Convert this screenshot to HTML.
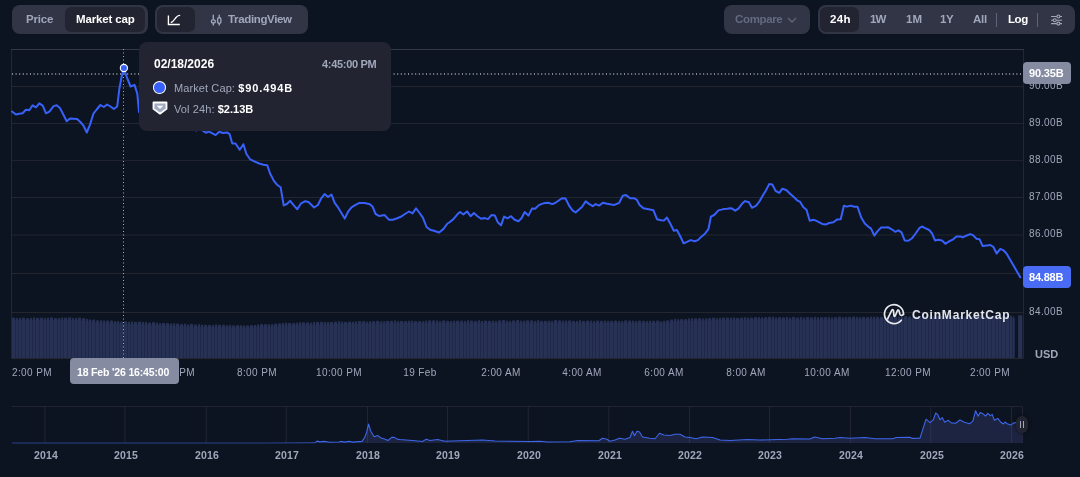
<!DOCTYPE html>
<html><head><meta charset="utf-8">
<style>
*{box-sizing:border-box;margin:0;padding:0}
html,body{width:1080px;height:477px;overflow:hidden;background:#0d1421;font-family:"Liberation Sans",sans-serif;}
.abs{position:absolute}
.pill{position:absolute;background:#323546;border-radius:8px;height:29px;top:5px}
.btn{position:absolute;background:#222531;border-radius:6px;top:2px;height:25px}
.t{position:absolute;font-size:12px;font-weight:700;white-space:nowrap;line-height:14px;will-change:transform}
.yl{position:absolute;left:1028.5px;font-size:10px;letter-spacing:0.4px;color:#a1a7bb;line-height:14px;white-space:nowrap;will-change:transform}
.xl{position:absolute;top:367px;width:80px;text-align:center;font-size:10px;letter-spacing:0.4px;color:#a1a7bb;line-height:12px;white-space:nowrap;will-change:transform}
.nl{position:absolute;top:448.5px;width:60px;text-align:center;font-size:10.5px;font-weight:700;letter-spacing:0.1px;color:#a1a7bb;line-height:12px;will-change:transform}
</style></head><body>
<svg width="1080" height="477" viewBox="0 0 1080 477" style="position:absolute;left:0;top:0">
<defs><clipPath id="vc"><rect x="12" y="300" width="1011" height="58"/></clipPath></defs>
<path d="M11.5 49 V358.5 H1023.5 V49" fill="none" stroke="#23272f" stroke-width="1"/>
<line x1="11" x2="1024" y1="49.5" y2="49.5" stroke="#343945" stroke-width="1"/>
<line x1="12" x2="1023" y1="86.5" y2="86.5" stroke="#23262f" stroke-width="1"/>
<line x1="12" x2="1023" y1="123.5" y2="123.5" stroke="#23262f" stroke-width="1"/>
<line x1="12" x2="1023" y1="160.4" y2="160.4" stroke="#23262f" stroke-width="1"/>
<line x1="12" x2="1023" y1="197.5" y2="197.5" stroke="#23262f" stroke-width="1"/>
<line x1="12" x2="1023" y1="235.0" y2="235.0" stroke="#23262f" stroke-width="1"/>
<line x1="12" x2="1023" y1="273.5" y2="273.5" stroke="#23262f" stroke-width="1"/>
<line x1="12" x2="1023" y1="312.5" y2="312.5" stroke="#23262f" stroke-width="1"/>
<polygon points="12,358 12,320.0 77,320.0 97,322.5 145,324.5 197,326.75 247,327.5 262,326.5 295,325.0 345,323.75 407,323.0 540,322.8 670,323.0 672,321.5 685,321.0 720,320.0 767,319.3 810,319.7 870,319.0 1000,318.0 1015,318.0 1015,358" fill="#1f2745"/>
<g clip-path="url(#vc)"><rect x="12" y="317.50" width="3.2" height="42.50" rx="1.3" fill="#273154"/><rect x="16" y="317.70" width="2.2" height="42.30" rx="1.3" fill="#273154"/><rect x="19" y="317.70" width="2.2" height="42.30" rx="1.3" fill="#273154"/><rect x="22" y="317.50" width="3.2" height="42.50" rx="1.3" fill="#273154"/><rect x="26" y="317.90" width="3.2" height="42.10" rx="1.3" fill="#273154"/><rect x="30" y="317.70" width="2.2" height="42.30" rx="1.3" fill="#273154"/><rect x="33" y="317.20" width="2.2" height="42.80" rx="1.3" fill="#273154"/><rect x="36" y="317.70" width="3.2" height="42.30" rx="1.3" fill="#273154"/><rect x="40" y="317.50" width="3.2" height="42.50" rx="1.3" fill="#273154"/><rect x="44" y="317.70" width="2.2" height="42.30" rx="1.3" fill="#273154"/><rect x="47" y="317.50" width="2.2" height="42.50" rx="1.3" fill="#273154"/><rect x="50" y="317.20" width="3.2" height="42.80" rx="1.3" fill="#273154"/><rect x="54" y="317.90" width="3.2" height="42.10" rx="1.3" fill="#273154"/><rect x="58" y="317.70" width="2.2" height="42.30" rx="1.3" fill="#273154"/><rect x="61" y="317.50" width="2.2" height="42.50" rx="1.3" fill="#273154"/><rect x="64" y="317.50" width="3.2" height="42.50" rx="1.3" fill="#273154"/><rect x="68" y="317.20" width="3.2" height="42.80" rx="1.3" fill="#273154"/><rect x="72" y="317.70" width="2.2" height="42.30" rx="1.3" fill="#273154"/><rect x="75" y="317.70" width="2.2" height="42.30" rx="1.3" fill="#273154"/><rect x="78" y="317.51" width="3.2" height="42.49" rx="1.3" fill="#273154"/><rect x="82" y="318.01" width="3.2" height="41.99" rx="1.3" fill="#273154"/><rect x="86" y="318.81" width="2.2" height="41.19" rx="1.3" fill="#273154"/><rect x="89" y="319.19" width="2.2" height="40.81" rx="1.3" fill="#273154"/><rect x="92" y="319.56" width="3.2" height="40.44" rx="1.3" fill="#273154"/><rect x="96" y="320.22" width="3.2" height="39.78" rx="1.3" fill="#273154"/><rect x="100" y="319.89" width="2.2" height="40.11" rx="1.3" fill="#273154"/><rect x="103" y="320.31" width="2.2" height="39.69" rx="1.3" fill="#273154"/><rect x="106" y="320.44" width="3.2" height="39.56" rx="1.3" fill="#273154"/><rect x="110" y="320.60" width="3.2" height="39.40" rx="1.3" fill="#273154"/><rect x="114" y="320.97" width="2.2" height="39.03" rx="1.3" fill="#273154"/><rect x="117" y="320.90" width="2.2" height="39.10" rx="1.3" fill="#273154"/><rect x="120" y="321.42" width="3.2" height="38.58" rx="1.3" fill="#273154"/><rect x="124" y="321.19" width="3.2" height="38.81" rx="1.3" fill="#273154"/><rect x="128" y="321.75" width="2.2" height="38.25" rx="1.3" fill="#273154"/><rect x="131" y="321.18" width="2.2" height="38.82" rx="1.3" fill="#273154"/><rect x="134" y="321.80" width="3.2" height="38.20" rx="1.3" fill="#273154"/><rect x="138" y="321.47" width="3.2" height="38.53" rx="1.3" fill="#273154"/><rect x="142" y="321.64" width="2.2" height="38.36" rx="1.3" fill="#273154"/><rect x="145" y="321.76" width="2.2" height="38.24" rx="1.3" fill="#273154"/><rect x="148" y="322.39" width="3.2" height="37.61" rx="1.3" fill="#273154"/><rect x="152" y="322.07" width="3.2" height="37.93" rx="1.3" fill="#273154"/><rect x="156" y="322.54" width="2.2" height="37.46" rx="1.3" fill="#273154"/><rect x="159" y="323.07" width="2.2" height="36.93" rx="1.3" fill="#273154"/><rect x="162" y="322.80" width="3.2" height="37.20" rx="1.3" fill="#273154"/><rect x="166" y="322.97" width="3.2" height="37.03" rx="1.3" fill="#273154"/><rect x="170" y="323.15" width="2.2" height="36.85" rx="1.3" fill="#273154"/><rect x="173" y="322.98" width="2.2" height="37.02" rx="1.3" fill="#273154"/><rect x="176" y="323.41" width="3.2" height="36.59" rx="1.3" fill="#273154"/><rect x="180" y="323.98" width="3.2" height="36.02" rx="1.3" fill="#273154"/><rect x="184" y="323.45" width="2.2" height="36.55" rx="1.3" fill="#273154"/><rect x="187" y="324.28" width="2.2" height="35.72" rx="1.3" fill="#273154"/><rect x="190" y="323.71" width="3.2" height="36.29" rx="1.3" fill="#273154"/><rect x="194" y="324.39" width="3.2" height="35.61" rx="1.3" fill="#273154"/><rect x="198" y="323.99" width="2.2" height="36.01" rx="1.3" fill="#273154"/><rect x="201" y="324.53" width="2.2" height="35.47" rx="1.3" fill="#273154"/><rect x="204" y="324.78" width="3.2" height="35.22" rx="1.3" fill="#273154"/><rect x="208" y="324.64" width="3.2" height="35.36" rx="1.3" fill="#273154"/><rect x="212" y="324.70" width="2.2" height="35.30" rx="1.3" fill="#273154"/><rect x="215" y="324.24" width="2.2" height="35.76" rx="1.3" fill="#273154"/><rect x="218" y="324.79" width="3.2" height="35.21" rx="1.3" fill="#273154"/><rect x="222" y="324.65" width="3.2" height="35.35" rx="1.3" fill="#273154"/><rect x="226" y="325.11" width="2.2" height="34.89" rx="1.3" fill="#273154"/><rect x="229" y="324.75" width="2.2" height="35.25" rx="1.3" fill="#273154"/><rect x="232" y="325.20" width="3.2" height="34.80" rx="1.3" fill="#273154"/><rect x="236" y="325.06" width="3.2" height="34.94" rx="1.3" fill="#273154"/><rect x="240" y="324.92" width="2.2" height="35.08" rx="1.3" fill="#273154"/><rect x="243" y="325.36" width="2.2" height="34.64" rx="1.3" fill="#273154"/><rect x="246" y="325.17" width="3.2" height="34.83" rx="1.3" fill="#273154"/><rect x="250" y="324.90" width="3.2" height="35.10" rx="1.3" fill="#273154"/><rect x="254" y="324.63" width="2.2" height="35.37" rx="1.3" fill="#273154"/><rect x="257" y="324.23" width="2.2" height="35.77" rx="1.3" fill="#273154"/><rect x="260" y="324.03" width="3.2" height="35.97" rx="1.3" fill="#273154"/><rect x="264" y="324.04" width="3.2" height="35.96" rx="1.3" fill="#273154"/><rect x="268" y="324.06" width="2.2" height="35.94" rx="1.3" fill="#273154"/><rect x="271" y="323.92" width="2.2" height="36.08" rx="1.3" fill="#273154"/><rect x="274" y="323.39" width="3.2" height="36.61" rx="1.3" fill="#273154"/><rect x="278" y="323.20" width="3.2" height="36.80" rx="1.3" fill="#273154"/><rect x="282" y="322.72" width="2.2" height="37.28" rx="1.3" fill="#273154"/><rect x="285" y="322.59" width="2.2" height="37.41" rx="1.3" fill="#273154"/><rect x="288" y="322.75" width="3.2" height="37.25" rx="1.3" fill="#273154"/><rect x="292" y="322.97" width="3.2" height="37.03" rx="1.3" fill="#273154"/><rect x="296" y="322.44" width="2.2" height="37.56" rx="1.3" fill="#273154"/><rect x="299" y="322.06" width="2.2" height="37.94" rx="1.3" fill="#273154"/><rect x="302" y="322.29" width="3.2" height="37.71" rx="1.3" fill="#273154"/><rect x="306" y="322.19" width="3.2" height="37.81" rx="1.3" fill="#273154"/><rect x="310" y="322.49" width="2.2" height="37.51" rx="1.3" fill="#273154"/><rect x="313" y="321.71" width="2.2" height="38.29" rx="1.3" fill="#273154"/><rect x="316" y="321.64" width="3.2" height="38.36" rx="1.3" fill="#273154"/><rect x="320" y="321.84" width="3.2" height="38.16" rx="1.3" fill="#273154"/><rect x="324" y="321.74" width="2.2" height="38.26" rx="1.3" fill="#273154"/><rect x="327" y="321.86" width="2.2" height="38.14" rx="1.3" fill="#273154"/><rect x="330" y="321.79" width="3.2" height="38.21" rx="1.3" fill="#273154"/><rect x="334" y="321.49" width="3.2" height="38.51" rx="1.3" fill="#273154"/><rect x="338" y="321.09" width="2.2" height="38.91" rx="1.3" fill="#273154"/><rect x="341" y="321.51" width="2.2" height="38.49" rx="1.3" fill="#273154"/><rect x="344" y="321.64" width="3.2" height="38.36" rx="1.3" fill="#273154"/><rect x="348" y="321.40" width="3.2" height="38.60" rx="1.3" fill="#273154"/><rect x="352" y="321.55" width="2.2" height="38.45" rx="1.3" fill="#273154"/><rect x="355" y="321.31" width="2.2" height="38.69" rx="1.3" fill="#273154"/><rect x="358" y="321.07" width="3.2" height="38.93" rx="1.3" fill="#273154"/><rect x="362" y="321.03" width="3.2" height="38.97" rx="1.3" fill="#273154"/><rect x="366" y="321.38" width="2.2" height="38.62" rx="1.3" fill="#273154"/><rect x="369" y="320.94" width="2.2" height="39.06" rx="1.3" fill="#273154"/><rect x="372" y="320.91" width="3.2" height="39.09" rx="1.3" fill="#273154"/><rect x="376" y="320.86" width="3.2" height="39.14" rx="1.3" fill="#273154"/><rect x="380" y="321.01" width="2.2" height="38.99" rx="1.3" fill="#273154"/><rect x="383" y="320.97" width="2.2" height="39.03" rx="1.3" fill="#273154"/><rect x="386" y="320.74" width="3.2" height="39.26" rx="1.3" fill="#273154"/><rect x="390" y="320.69" width="3.2" height="39.31" rx="1.3" fill="#273154"/><rect x="394" y="320.34" width="2.2" height="39.66" rx="1.3" fill="#273154"/><rect x="397" y="321.00" width="2.2" height="39.00" rx="1.3" fill="#273154"/><rect x="400" y="320.77" width="3.2" height="39.23" rx="1.3" fill="#273154"/><rect x="404" y="320.92" width="3.2" height="39.08" rx="1.3" fill="#273154"/><rect x="408" y="320.50" width="2.2" height="39.50" rx="1.3" fill="#273154"/><rect x="411" y="320.49" width="2.2" height="39.51" rx="1.3" fill="#273154"/><rect x="414" y="320.89" width="3.2" height="39.11" rx="1.3" fill="#273154"/><rect x="418" y="320.88" width="3.2" height="39.12" rx="1.3" fill="#273154"/><rect x="422" y="320.88" width="2.2" height="39.12" rx="1.3" fill="#273154"/><rect x="425" y="320.47" width="2.2" height="39.53" rx="1.3" fill="#273154"/><rect x="428" y="320.17" width="3.2" height="39.83" rx="1.3" fill="#273154"/><rect x="432" y="320.16" width="3.2" height="39.84" rx="1.3" fill="#273154"/><rect x="436" y="320.15" width="2.2" height="39.85" rx="1.3" fill="#273154"/><rect x="439" y="320.65" width="2.2" height="39.35" rx="1.3" fill="#273154"/><rect x="442" y="320.15" width="3.2" height="39.85" rx="1.3" fill="#273154"/><rect x="446" y="320.64" width="3.2" height="39.36" rx="1.3" fill="#273154"/><rect x="450" y="320.63" width="2.2" height="39.37" rx="1.3" fill="#273154"/><rect x="453" y="320.43" width="2.2" height="39.57" rx="1.3" fill="#273154"/><rect x="456" y="320.62" width="3.2" height="39.38" rx="1.3" fill="#273154"/><rect x="460" y="320.62" width="3.2" height="39.38" rx="1.3" fill="#273154"/><rect x="464" y="320.81" width="2.2" height="39.19" rx="1.3" fill="#273154"/><rect x="467" y="320.11" width="2.2" height="39.89" rx="1.3" fill="#273154"/><rect x="470" y="320.40" width="3.2" height="39.60" rx="1.3" fill="#273154"/><rect x="474" y="320.80" width="3.2" height="39.20" rx="1.3" fill="#273154"/><rect x="478" y="320.09" width="2.2" height="39.91" rx="1.3" fill="#273154"/><rect x="481" y="320.79" width="2.2" height="39.21" rx="1.3" fill="#273154"/><rect x="484" y="320.58" width="3.2" height="39.42" rx="1.3" fill="#273154"/><rect x="488" y="320.78" width="3.2" height="39.22" rx="1.3" fill="#273154"/><rect x="492" y="320.57" width="2.2" height="39.43" rx="1.3" fill="#273154"/><rect x="495" y="320.77" width="2.2" height="39.23" rx="1.3" fill="#273154"/><rect x="498" y="320.36" width="3.2" height="39.64" rx="1.3" fill="#273154"/><rect x="502" y="320.05" width="3.2" height="39.95" rx="1.3" fill="#273154"/><rect x="506" y="320.55" width="2.2" height="39.45" rx="1.3" fill="#273154"/><rect x="509" y="320.74" width="2.2" height="39.26" rx="1.3" fill="#273154"/><rect x="512" y="320.34" width="3.2" height="39.66" rx="1.3" fill="#273154"/><rect x="516" y="320.03" width="3.2" height="39.97" rx="1.3" fill="#273154"/><rect x="520" y="320.53" width="2.2" height="39.47" rx="1.3" fill="#273154"/><rect x="523" y="320.52" width="2.2" height="39.48" rx="1.3" fill="#273154"/><rect x="526" y="320.32" width="3.2" height="39.68" rx="1.3" fill="#273154"/><rect x="530" y="320.31" width="3.2" height="39.69" rx="1.3" fill="#273154"/><rect x="534" y="320.71" width="2.2" height="39.29" rx="1.3" fill="#273154"/><rect x="537" y="320.00" width="2.2" height="40.00" rx="1.3" fill="#273154"/><rect x="540" y="320.70" width="3.2" height="39.30" rx="1.3" fill="#273154"/><rect x="544" y="320.71" width="3.2" height="39.29" rx="1.3" fill="#273154"/><rect x="548" y="320.51" width="2.2" height="39.49" rx="1.3" fill="#273154"/><rect x="551" y="320.72" width="2.2" height="39.28" rx="1.3" fill="#273154"/><rect x="554" y="320.02" width="3.2" height="39.98" rx="1.3" fill="#273154"/><rect x="558" y="320.33" width="3.2" height="39.67" rx="1.3" fill="#273154"/><rect x="562" y="320.54" width="2.2" height="39.46" rx="1.3" fill="#273154"/><rect x="565" y="320.34" width="2.2" height="39.66" rx="1.3" fill="#273154"/><rect x="568" y="320.35" width="3.2" height="39.65" rx="1.3" fill="#273154"/><rect x="572" y="320.75" width="3.2" height="39.25" rx="1.3" fill="#273154"/><rect x="576" y="320.76" width="2.2" height="39.24" rx="1.3" fill="#273154"/><rect x="579" y="320.06" width="2.2" height="39.94" rx="1.3" fill="#273154"/><rect x="582" y="320.77" width="3.2" height="39.23" rx="1.3" fill="#273154"/><rect x="586" y="320.57" width="3.2" height="39.43" rx="1.3" fill="#273154"/><rect x="590" y="320.58" width="2.2" height="39.42" rx="1.3" fill="#273154"/><rect x="593" y="320.78" width="2.2" height="39.22" rx="1.3" fill="#273154"/><rect x="596" y="320.39" width="3.2" height="39.61" rx="1.3" fill="#273154"/><rect x="600" y="320.79" width="3.2" height="39.21" rx="1.3" fill="#273154"/><rect x="604" y="320.40" width="2.2" height="39.60" rx="1.3" fill="#273154"/><rect x="607" y="320.81" width="2.2" height="39.19" rx="1.3" fill="#273154"/><rect x="610" y="320.81" width="3.2" height="39.19" rx="1.3" fill="#273154"/><rect x="614" y="320.62" width="3.2" height="39.38" rx="1.3" fill="#273154"/><rect x="618" y="320.82" width="2.2" height="39.18" rx="1.3" fill="#273154"/><rect x="621" y="320.83" width="2.2" height="39.17" rx="1.3" fill="#273154"/><rect x="624" y="320.13" width="3.2" height="39.87" rx="1.3" fill="#273154"/><rect x="628" y="320.44" width="3.2" height="39.56" rx="1.3" fill="#273154"/><rect x="632" y="320.44" width="2.2" height="39.56" rx="1.3" fill="#273154"/><rect x="635" y="320.65" width="2.2" height="39.35" rx="1.3" fill="#273154"/><rect x="638" y="320.45" width="3.2" height="39.55" rx="1.3" fill="#273154"/><rect x="642" y="320.86" width="3.2" height="39.14" rx="1.3" fill="#273154"/><rect x="646" y="320.67" width="2.2" height="39.33" rx="1.3" fill="#273154"/><rect x="649" y="320.47" width="2.2" height="39.53" rx="1.3" fill="#273154"/><rect x="652" y="320.87" width="3.2" height="39.13" rx="1.3" fill="#273154"/><rect x="656" y="320.48" width="3.2" height="39.52" rx="1.3" fill="#273154"/><rect x="660" y="320.89" width="2.2" height="39.11" rx="1.3" fill="#273154"/><rect x="663" y="320.49" width="2.2" height="39.51" rx="1.3" fill="#273154"/><rect x="666" y="320.20" width="3.2" height="39.80" rx="1.3" fill="#273154"/><rect x="670" y="319.38" width="3.2" height="40.62" rx="1.3" fill="#273154"/><rect x="674" y="318.87" width="2.2" height="41.13" rx="1.3" fill="#273154"/><rect x="677" y="318.95" width="2.2" height="41.05" rx="1.3" fill="#273154"/><rect x="680" y="319.03" width="3.2" height="40.97" rx="1.3" fill="#273154"/><rect x="684" y="318.89" width="3.2" height="41.11" rx="1.3" fill="#273154"/><rect x="688" y="318.37" width="2.2" height="41.63" rx="1.3" fill="#273154"/><rect x="691" y="317.99" width="2.2" height="42.01" rx="1.3" fill="#273154"/><rect x="694" y="318.20" width="3.2" height="41.80" rx="1.3" fill="#273154"/><rect x="698" y="318.09" width="3.2" height="41.91" rx="1.3" fill="#273154"/><rect x="702" y="318.37" width="2.2" height="41.63" rx="1.3" fill="#273154"/><rect x="705" y="317.89" width="2.2" height="42.11" rx="1.3" fill="#273154"/><rect x="708" y="318.00" width="3.2" height="42.00" rx="1.3" fill="#273154"/><rect x="712" y="317.39" width="3.2" height="42.61" rx="1.3" fill="#273154"/><rect x="716" y="317.97" width="2.2" height="42.03" rx="1.3" fill="#273154"/><rect x="719" y="317.49" width="2.2" height="42.51" rx="1.3" fill="#273154"/><rect x="722" y="317.45" width="3.2" height="42.55" rx="1.3" fill="#273154"/><rect x="726" y="317.39" width="3.2" height="42.61" rx="1.3" fill="#273154"/><rect x="730" y="317.53" width="2.2" height="42.47" rx="1.3" fill="#273154"/><rect x="733" y="317.28" width="2.2" height="42.72" rx="1.3" fill="#273154"/><rect x="736" y="317.64" width="3.2" height="42.36" rx="1.3" fill="#273154"/><rect x="740" y="317.38" width="3.2" height="42.62" rx="1.3" fill="#273154"/><rect x="744" y="317.12" width="2.2" height="42.88" rx="1.3" fill="#273154"/><rect x="747" y="317.48" width="2.2" height="42.52" rx="1.3" fill="#273154"/><rect x="750" y="317.43" width="3.2" height="42.57" rx="1.3" fill="#273154"/><rect x="754" y="316.97" width="3.2" height="43.03" rx="1.3" fill="#273154"/><rect x="758" y="317.11" width="2.2" height="42.89" rx="1.3" fill="#273154"/><rect x="761" y="317.27" width="2.2" height="42.73" rx="1.3" fill="#273154"/><rect x="764" y="317.02" width="3.2" height="42.98" rx="1.3" fill="#273154"/><rect x="768" y="316.82" width="3.2" height="43.18" rx="1.3" fill="#273154"/><rect x="772" y="316.56" width="2.2" height="43.44" rx="1.3" fill="#273154"/><rect x="775" y="317.29" width="2.2" height="42.71" rx="1.3" fill="#273154"/><rect x="778" y="317.12" width="3.2" height="42.88" rx="1.3" fill="#273154"/><rect x="782" y="317.35" width="3.2" height="42.65" rx="1.3" fill="#273154"/><rect x="786" y="316.69" width="2.2" height="43.31" rx="1.3" fill="#273154"/><rect x="789" y="317.42" width="2.2" height="42.58" rx="1.3" fill="#273154"/><rect x="792" y="316.75" width="3.2" height="43.25" rx="1.3" fill="#273154"/><rect x="796" y="317.48" width="3.2" height="42.52" rx="1.3" fill="#273154"/><rect x="800" y="316.82" width="2.2" height="43.18" rx="1.3" fill="#273154"/><rect x="803" y="317.35" width="2.2" height="42.65" rx="1.3" fill="#273154"/><rect x="806" y="316.88" width="3.2" height="43.12" rx="1.3" fill="#273154"/><rect x="810" y="317.18" width="3.2" height="42.82" rx="1.3" fill="#273154"/><rect x="814" y="316.84" width="2.2" height="43.16" rx="1.3" fill="#273154"/><rect x="817" y="317.10" width="2.2" height="42.90" rx="1.3" fill="#273154"/><rect x="820" y="317.07" width="3.2" height="42.93" rx="1.3" fill="#273154"/><rect x="824" y="317.02" width="3.2" height="42.98" rx="1.3" fill="#273154"/><rect x="828" y="316.67" width="2.2" height="43.33" rx="1.3" fill="#273154"/><rect x="831" y="317.14" width="2.2" height="42.86" rx="1.3" fill="#273154"/><rect x="834" y="317.10" width="3.2" height="42.90" rx="1.3" fill="#273154"/><rect x="838" y="316.56" width="3.2" height="43.44" rx="1.3" fill="#273154"/><rect x="842" y="317.01" width="2.2" height="42.99" rx="1.3" fill="#273154"/><rect x="845" y="316.77" width="2.2" height="43.23" rx="1.3" fill="#273154"/><rect x="848" y="316.74" width="3.2" height="43.26" rx="1.3" fill="#273154"/><rect x="852" y="316.39" width="3.2" height="43.61" rx="1.3" fill="#273154"/><rect x="856" y="316.85" width="2.2" height="43.15" rx="1.3" fill="#273154"/><rect x="859" y="317.01" width="2.2" height="42.99" rx="1.3" fill="#273154"/><rect x="862" y="316.78" width="3.2" height="43.22" rx="1.3" fill="#273154"/><rect x="866" y="316.93" width="3.2" height="43.07" rx="1.3" fill="#273154"/><rect x="870" y="316.49" width="2.2" height="43.51" rx="1.3" fill="#273154"/><rect x="873" y="316.47" width="2.2" height="43.53" rx="1.3" fill="#273154"/><rect x="876" y="316.64" width="3.2" height="43.36" rx="1.3" fill="#273154"/><rect x="880" y="316.81" width="3.2" height="43.19" rx="1.3" fill="#273154"/><rect x="884" y="316.38" width="2.2" height="43.62" rx="1.3" fill="#273154"/><rect x="887" y="316.36" width="2.2" height="43.64" rx="1.3" fill="#273154"/><rect x="890" y="316.33" width="3.2" height="43.67" rx="1.3" fill="#273154"/><rect x="894" y="316.30" width="3.2" height="43.70" rx="1.3" fill="#273154"/><rect x="898" y="316.47" width="2.2" height="43.53" rx="1.3" fill="#273154"/><rect x="901" y="316.25" width="2.2" height="43.75" rx="1.3" fill="#273154"/><rect x="904" y="315.93" width="3.2" height="44.07" rx="1.3" fill="#273154"/><rect x="908" y="316.40" width="3.2" height="43.60" rx="1.3" fill="#273154"/><rect x="912" y="316.17" width="2.2" height="43.83" rx="1.3" fill="#273154"/><rect x="915" y="316.14" width="2.2" height="43.86" rx="1.3" fill="#273154"/><rect x="918" y="315.82" width="3.2" height="44.18" rx="1.3" fill="#273154"/><rect x="922" y="316.09" width="3.2" height="43.91" rx="1.3" fill="#273154"/><rect x="926" y="316.06" width="2.2" height="43.94" rx="1.3" fill="#273154"/><rect x="929" y="316.23" width="2.2" height="43.77" rx="1.3" fill="#273154"/><rect x="932" y="316.41" width="3.2" height="43.59" rx="1.3" fill="#273154"/><rect x="936" y="315.98" width="3.2" height="44.02" rx="1.3" fill="#273154"/><rect x="940" y="315.95" width="2.2" height="44.05" rx="1.3" fill="#273154"/><rect x="943" y="316.13" width="2.2" height="43.87" rx="1.3" fill="#273154"/><rect x="946" y="316.10" width="3.2" height="43.90" rx="1.3" fill="#273154"/><rect x="950" y="315.57" width="3.2" height="44.43" rx="1.3" fill="#273154"/><rect x="954" y="315.84" width="2.2" height="44.16" rx="1.3" fill="#273154"/><rect x="957" y="316.02" width="2.2" height="43.98" rx="1.3" fill="#273154"/><rect x="960" y="315.80" width="3.2" height="44.20" rx="1.3" fill="#273154"/><rect x="964" y="316.17" width="3.2" height="43.83" rx="1.3" fill="#273154"/><rect x="968" y="315.73" width="2.2" height="44.27" rx="1.3" fill="#273154"/><rect x="971" y="316.11" width="2.2" height="43.89" rx="1.3" fill="#273154"/><rect x="974" y="315.89" width="3.2" height="44.11" rx="1.3" fill="#273154"/><rect x="978" y="315.36" width="3.2" height="44.64" rx="1.3" fill="#273154"/><rect x="982" y="315.63" width="2.2" height="44.37" rx="1.3" fill="#273154"/><rect x="985" y="316.00" width="2.2" height="44.00" rx="1.3" fill="#273154"/><rect x="988" y="315.58" width="3.2" height="44.42" rx="1.3" fill="#273154"/><rect x="992" y="315.55" width="3.2" height="44.45" rx="1.3" fill="#273154"/><rect x="996" y="315.52" width="2.2" height="44.48" rx="1.3" fill="#273154"/><rect x="999" y="315.70" width="2.2" height="44.30" rx="1.3" fill="#273154"/><rect x="1002" y="315.50" width="3.2" height="44.50" rx="1.3" fill="#273154"/><rect x="1006" y="315.50" width="3.2" height="44.50" rx="1.3" fill="#273154"/><rect x="1010" y="315.50" width="2.2" height="44.50" rx="1.3" fill="#273154"/><rect x="1013" y="315.90" width="1.2" height="44.10" rx="1.3" fill="#273154"/><rect x="1018.1" y="315.3" width="4.2" height="45" rx="1.1" fill="#283153"/></g>
<line x1="12" x2="1023" y1="74" y2="74" stroke="#a9adb9" stroke-width="1.5" stroke-dasharray="1 2.6"/>
<line x1="123.5" x2="123.5" y1="49" y2="358" stroke="#a9adb9" stroke-width="1" stroke-dasharray="1 2.5"/>
<polyline points="12,111.5 15.9,114.5 19.2,113.7 22.6,113.3 25.9,109.8 29.3,110.3 32.6,105.3 36,107.3 39.3,103.3 42.7,105.6 46,113.3 49.4,111.7 53.6,106.1 56.6,105.3 60,108.1 63.3,114.5 66.7,121.2 70,118.4 73.4,118.7 77.1,119 80.4,122 83.8,126.2 86.8,132.5 90,124.6 93.4,113.7 96.7,109.5 100.4,105 103.8,107 107.1,104.5 110.5,106.5 113.8,109 117.2,106.5 119.4,88.5 121.6,76.8 123.7,68.2 127.3,78.5 130.6,86.5 134.5,84.9 137.3,93.6 139,112 150,118 170,122 190,126 196.3,130.4 200,127.5 203.3,131.2 205.9,132.7 208.9,131.6 211.5,132.9 215.6,135.1 219.3,131.8 222.9,133 227,132.4 229.6,134.1 232.3,143.5 235.5,143.5 239.7,149.8 243.4,144.2 246.4,154 250.1,159.3 255.4,161.8 259.2,163.5 263.4,164.7 267.2,165.2 270.1,173.5 273.9,180.9 277,184.7 280.6,187.2 283.7,205.4 286.9,204 290.2,200.8 293.8,205.4 297.3,209.2 301.1,203.3 305.3,201.2 308.5,202 314.1,207.5 317.9,205 321,198.7 324.6,194.1 328,197 331.5,194.5 334.7,202.9 337.8,207.1 344.7,218.6 348.3,211.3 351.4,207.5 354.2,205.6 359.4,202.9 364.7,203.1 369.9,204.2 372.6,206.7 375.6,214 379.4,216.1 384.6,215.1 388.8,219.7 393,219.7 397.2,218.2 401.4,216.5 404.9,214 409.1,211.5 412.5,213.4 416,208.4 419.6,213 423,217.8 426.5,227 430.1,229.7 433.9,230.8 439.1,232.5 443.3,229.1 447.5,223.5 449.2,222.5 453.4,219.1 457.6,214.1 460.1,212 463.4,214.5 467,211.4 470.6,216.2 473.9,213 477.5,216.2 481.1,218.7 484.8,218.1 488,219.1 491.5,215.1 494.9,215.6 497.8,222.3 501,225.4 504.1,216.6 507.5,218.3 511,216.2 514.6,219.7 518.4,221.2 521.5,218.3 524.7,212 528.4,215.6 532,208.6 535.1,208.8 538.9,205.1 542.5,203.6 545,203 548.4,202.8 552.2,204.1 555.1,203 558.4,200.7 562,198.2 565.6,198.6 569.4,206.2 572.5,210.4 575.6,212.5 578.8,209.7 581.9,207 585.7,201.4 589.3,204.1 592.8,206.2 595.6,204.1 599.1,205.6 602.9,202.8 607.1,203.7 611.3,204.5 614.4,204.9 619.2,202.8 622.8,195.7 626,195.1 630.1,198.2 633.9,198.2 636.9,199.9 639.6,204.9 643.4,208.3 648.6,209.3 653.4,210.2 657,219.2 661.2,220.2 663.9,220.6 666.9,217.5 670.2,223.4 673.8,230.7 676.9,230.1 680.1,236 683.6,243.3 687,241.8 690.6,240.1 694.7,241.2 697.9,240.1 701.7,236.4 705.2,233.4 708.4,229.2 710.9,216.7 714.2,215 718.4,210.4 723.5,209.1 727.2,208.7 730,208.2 732.1,208.6 735.2,210.7 738.4,208.6 742.2,203.6 745.1,201.1 748.9,202.3 752,207.8 756.2,205.7 759.4,201.5 762.5,196.1 765.6,191 769.2,184.1 772.3,184.5 775.7,191 779.3,192.9 782.4,188.7 786.2,190 790.4,194 794.6,197.7 797.1,200.3 800.2,201.9 803.4,207.2 806.5,209.7 809.7,220.8 813.4,219.7 817,221.2 822.2,223.9 826,224.4 829.2,223 833.4,222.3 837.2,219.4 840.7,219.2 843.9,205.8 847,206.6 850.6,205.6 854.4,206.8 857.5,206.8 861.1,217.3 864.8,223.6 869,227.2 871.1,228.6 874.3,235.6 877.4,231.4 881.2,227.4 885.8,227.6 887.9,227.2 891.7,229.3 895.2,231.8 898.4,230.3 901.5,232.4 904.7,240.4 908.4,240.8 912,238.3 915.6,233.5 919.3,228.2 921.9,226.5 925.1,228.1 929.2,230 932,233.4 935,240.4 938.5,239.7 941.9,240.4 945.4,243.8 948.8,241.5 952.7,239.7 956.4,236.4 960.4,236.4 962.7,237.4 966.1,235.7 970.3,234.1 973,235.1 976.5,238.7 979.5,239.2 982.7,246.1 986.9,245.4 990.3,245 993.3,246.8 996.6,253.5 1000.3,248.9 1003.5,250.3 1006.5,253.5 1020.3,277.3" fill="none" stroke="#3861fb" stroke-width="2" stroke-linejoin="round" stroke-linecap="round"/>
<circle cx="123.9" cy="68" r="3.6" fill="#3861fb" stroke="#ffffff" stroke-width="1.1"/>
<path d="M12 406.5 H1022.5 V443" fill="none" stroke="#222531" stroke-width="1"/>
<line x1="45" x2="45" y1="406" y2="443" stroke="#222531" stroke-width="1"/>
<line x1="125" x2="125" y1="406" y2="443" stroke="#222531" stroke-width="1"/>
<line x1="206.25" x2="206.25" y1="406" y2="443" stroke="#222531" stroke-width="1"/>
<line x1="286.25" x2="286.25" y1="406" y2="443" stroke="#222531" stroke-width="1"/>
<line x1="367.5" x2="367.5" y1="406" y2="443" stroke="#222531" stroke-width="1"/>
<line x1="447.5" x2="447.5" y1="406" y2="443" stroke="#222531" stroke-width="1"/>
<line x1="528.25" x2="528.25" y1="406" y2="443" stroke="#222531" stroke-width="1"/>
<line x1="608.75" x2="608.75" y1="406" y2="443" stroke="#222531" stroke-width="1"/>
<line x1="689.5" x2="689.5" y1="406" y2="443" stroke="#222531" stroke-width="1"/>
<line x1="769.5" x2="769.5" y1="406" y2="443" stroke="#222531" stroke-width="1"/>
<line x1="850.5" x2="850.5" y1="406" y2="443" stroke="#222531" stroke-width="1"/>
<line x1="930.75" x2="930.75" y1="406" y2="443" stroke="#222531" stroke-width="1"/>
<line x1="1011.5" x2="1011.5" y1="406" y2="443" stroke="#222531" stroke-width="1"/>
<polygon points="12,443 12,443 270,443 315,442.6 317.1,441.1 319.9,441.9 324.1,441.4 329.6,442.3 338.9,442 340.7,441.4 344.4,442.1 349.1,441.4 352.8,442.1 362,441.4 364.8,437.2 366.7,432.1 368.5,424 370.8,431.2 374.1,436.8 377.8,435.6 380.6,437.7 385.2,439.3 388,440.5 391.7,437.4 394.4,437.4 397.2,439.1 400,439.5 415,440.75 422.5,441.5 426.25,439.25 430,440.5 437.5,439.5 445,441.25 482.5,440 495,441 530,441.5 540,441.25 547.5,442 570,441.75 577.5,440.5 598.75,440.75 602.5,438.25 607,439.25 610,441.25 615,440 619.5,438.25 625,439.25 630,437.5 632.5,431.25 634.5,435.75 637,431.25 639.5,432 642.5,437 650,438.25 655,438.75 659.5,433.25 663.75,435 670,435.5 675,434.25 680,434.25 685,437 690,437.5 696.25,438.75 702.5,437 712.5,437.5 720,440 730,440.5 747.5,439.5 760,440 787.5,439.25 792.5,438.75 810,439 814.5,437 822.5,438.75 835,438.25 840,437.5 850,438.25 865,437.5 875,438.75 892.5,438.75 896.25,437.5 910,437.3 912.2,438.4 920,438.1 926.1,419.2 930,422.6 933.3,419.8 935.8,412.9 937.8,414.8 940,419.8 942.2,417.6 944.7,422.2 948.3,420.3 951.3,422.9 955.6,423.3 960,420 964.4,422.2 969.4,423.7 972.8,421.4 975.6,410.7 978,416.2 980.2,412.6 982.8,413.7 985.6,416.2 987.8,413.3 990.2,415.6 992.2,414.4 994.4,420.3 997.8,418.4 1000.6,422 1003.3,424 1005,422 1007.2,423.7 1010.6,425.1 1013.3,423.1 1015.6,422.6 1022,422.6 1022.5,443" fill="rgba(88,100,198,0.2)"/>
<polyline points="315,442.6 317.1,441.1 319.9,441.9 324.1,441.4 329.6,442.3 338.9,442 340.7,441.4 344.4,442.1 349.1,441.4 352.8,442.1 362,441.4 364.8,437.2 366.7,432.1 368.5,424 370.8,431.2 374.1,436.8 377.8,435.6 380.6,437.7 385.2,439.3 388,440.5 391.7,437.4 394.4,437.4 397.2,439.1 400,439.5 415,440.75 422.5,441.5 426.25,439.25 430,440.5 437.5,439.5 445,441.25 482.5,440 495,441 530,441.5 540,441.25 547.5,442 570,441.75 577.5,440.5 598.75,440.75 602.5,438.25 607,439.25 610,441.25 615,440 619.5,438.25 625,439.25 630,437.5 632.5,431.25 634.5,435.75 637,431.25 639.5,432 642.5,437 650,438.25 655,438.75 659.5,433.25 663.75,435 670,435.5 675,434.25 680,434.25 685,437 690,437.5 696.25,438.75 702.5,437 712.5,437.5 720,440 730,440.5 747.5,439.5 760,440 787.5,439.25 792.5,438.75 810,439 814.5,437 822.5,438.75 835,438.25 840,437.5 850,438.25 865,437.5 875,438.75 892.5,438.75 896.25,437.5 910,437.3 912.2,438.4 920,438.1 926.1,419.2 930,422.6 933.3,419.8 935.8,412.9 937.8,414.8 940,419.8 942.2,417.6 944.7,422.2 948.3,420.3 951.3,422.9 955.6,423.3 960,420 964.4,422.2 969.4,423.7 972.8,421.4 975.6,410.7 978,416.2 980.2,412.6 982.8,413.7 985.6,416.2 987.8,413.3 990.2,415.6 992.2,414.4 994.4,420.3 997.8,418.4 1000.6,422 1003.3,424 1005,422 1007.2,423.7 1010.6,425.1 1013.3,423.1 1015.6,422.6 1022,422.6" fill="none" stroke="#3d66ea" stroke-width="1.1" stroke-linejoin="round"/>
<polyline points="12,443 270,443 315,442.6" fill="none" stroke="#3d66ea" stroke-opacity="0.55" stroke-width="1.1"/>
</svg>
<div class="yl" style="top:78.7px">90.00B</div>
<div class="yl" style="top:115.7px">89.00B</div>
<div class="yl" style="top:152.6px">88.00B</div>
<div class="yl" style="top:189.7px">87.00B</div>
<div class="yl" style="top:227.2px">86.00B</div>
<div class="yl" style="top:304.7px">84.00B</div>
<div class="xl" style="left:-7.6px">2:00 PM</div>
<div class="xl" style="left:135.2px">6:00 PM</div>
<div class="xl" style="left:216.8px">8:00 PM</div>
<div class="xl" style="left:298.5px">10:00 PM</div>
<div class="xl" style="left:379.7px">19 Feb</div>
<div class="xl" style="left:461.3px">2:00 AM</div>
<div class="xl" style="left:542.3px">4:00 AM</div>
<div class="xl" style="left:624.1px">6:00 AM</div>
<div class="xl" style="left:705.7px">8:00 AM</div>
<div class="xl" style="left:786.8px">10:00 AM</div>
<div class="xl" style="left:868.1px">12:00 PM</div>
<div class="xl" style="left:949.9px">2:00 PM</div>
<div class="nl" style="left:15.8px">2014</div>
<div class="nl" style="left:95.8px">2015</div>
<div class="nl" style="left:177.1px">2016</div>
<div class="nl" style="left:257.1px">2017</div>
<div class="nl" style="left:338.3px">2018</div>
<div class="nl" style="left:418.3px">2019</div>
<div class="nl" style="left:499.1px">2020</div>
<div class="nl" style="left:579.5px">2021</div>
<div class="nl" style="left:660.3px">2022</div>
<div class="nl" style="left:740.3px">2023</div>
<div class="nl" style="left:821.3px">2024</div>
<div class="nl" style="left:901.5px">2025</div>
<div class="nl" style="left:982.3px">2026</div>
<!-- top-left pills -->
<div class="pill" style="left:12px;width:136px">
  <div class="btn" style="left:53px;width:80px"></div>
</div>
<div class="t" id="tPrice" style="left:26px;top:12px;color:#a1a7bb;letter-spacing:-0.2px;font-size:11.5px;">Price</div>
<div class="t" id="tMcap" style="left:76px;top:12px;color:#ffffff;letter-spacing:-0.15px;font-size:11.5px;">Market cap</div>
<div class="pill" style="left:155px;width:153px">
  <div class="btn" style="left:2px;width:38px"></div>
</div>
<svg class="abs" style="left:160px;top:8px" width="30" height="24" viewBox="0 0 30 24"><path d="M8.4 7.4 V16.5 H19.8" fill="none" stroke="#fff" stroke-width="1.35"/><path d="M11.3 14.4 C13 13.6 14 12 15.6 10 C17 8.2 18 7.4 19.6 7.4" fill="none" stroke="#fff" stroke-width="1.3" stroke-linecap="round"/></svg>
<svg class="abs" style="left:206px;top:11px" width="20" height="18" viewBox="0 0 20 18"><g fill="none" stroke="#a1a7bb" stroke-width="1.35"><rect x="5.4" y="8.8" width="3.9" height="3.1" rx="1.5"/><rect x="11.6" y="6.7" width="3.3" height="5.6" rx="1.5"/><path d="M7.3 3.8V8.8M7.3 11.9V14.5M13.25 3.8V6.7M13.25 12.3V14.5"/></g></svg>
<div class="t" id="tTV" style="left:227.5px;top:12px;color:#a1a7bb;letter-spacing:-0.35px;font-size:11.5px;">TradingView</div>

<div class="pill" style="left:724px;width:86px"></div>
<div class="t" id="tCmp" style="left:734.7px;top:12px;color:#646a80;font-size:11.5px;letter-spacing:-0.35px">Compare</div>
<svg class="abs" style="left:787px;top:16px" width="10" height="8" viewBox="0 0 10 8"><path d="M1 2 L5 6 L9 2" fill="none" stroke="#5e6479" stroke-width="1.4"/></svg>

<div class="pill" style="left:818px;width:257px">
  <div class="btn" style="left:2px;width:39px"></div>
</div>
<div class="t" id="t24" style="left:829.5px;top:12px;color:#fff;letter-spacing:0.3px;font-size:11.5px;">24h</div>
<div class="t" id="t1W" style="left:869.5px;top:12px;color:#a1a7bb;letter-spacing:-0.8px;font-size:11.5px;">1W</div>
<div class="t" id="t1M" style="left:906px;top:12px;color:#a1a7bb;font-size:11.5px;">1M</div>
<div class="t" id="t1Y" style="left:940px;top:12px;color:#a1a7bb;letter-spacing:-0.4px;font-size:11.5px;">1Y</div>
<div class="t" id="tAll" style="left:973px;top:12px;color:#a1a7bb;letter-spacing:-0.3px;font-size:11.5px;">All</div>
<div class="abs" style="left:996.2px;top:13px;width:1.1px;height:14px;background:#5e6479"></div>
<div class="t" id="tLog" style="left:1007.5px;top:12px;color:#fff;letter-spacing:-0.4px;font-size:11.5px;">Log</div>
<div class="abs" style="left:1037.3px;top:13px;width:1.1px;height:14px;background:#5e6479"></div>
<svg class="abs" style="left:1045px;top:10px" width="24" height="20" viewBox="0 0 24 20"><g fill="none" stroke="#a1a7bb" stroke-width="1.1"><path d="M6.1 6.5H17M6.1 10.3H17M6.1 13.6H17"/><circle cx="13.4" cy="6.5" r="1.5" fill="#323546"/><circle cx="9.7" cy="10.3" r="1.5" fill="#323546"/><circle cx="13.4" cy="13.6" r="1.5" fill="#323546"/></g></svg>

<!-- tooltip -->
<div class="abs" style="left:139px;top:42px;width:252px;height:89.4px;background:#222531;border-radius:8px"></div>
<div class="t" id="tDate" style="left:154px;top:57px;color:#fff">02/18/2026</div>
<div class="t" id="tTime" style="left:322px;top:57px;color:#a1a7bb;font-size:11px;letter-spacing:-0.3px">4:45:00 PM</div>
<div class="abs" style="left:153px;top:81px;width:13px;height:12.5px;border-radius:50%;background:#3861fb;border:1px solid #fff"></div>
<div class="t" id="tMC" style="left:173.5px;top:81px;color:#a1a7bb;font-weight:400;font-size:11px"><span id="mc1" style="letter-spacing:0.1px">Market Cap: </span><b id="mc2" style="color:#fff;letter-spacing:0.9px">$90.494B</b></div>
<svg class="abs" style="left:152px;top:100.5px" width="16" height="15" viewBox="0 0 16 15"><path d="M1.5 1.5 H14.5 V7.9 L8 12.7 L1.5 7.9 Z" fill="#a3abc2" stroke="#fff" stroke-width="1.8" stroke-linejoin="round"/><path d="M5.3 5 H10.7 L8 7.6 Z" fill="#fff" stroke="#fff" stroke-width="0.6" stroke-linejoin="round"/></svg>
<div class="t" id="tVol" style="left:173.5px;top:102px;color:#a1a7bb;font-weight:400;font-size:11px"><span id="v1" style="letter-spacing:0.1px">Vol 24h: </span><b id="v2" style="color:#fff;letter-spacing:0px">$2.13B</b></div>

<!-- price labels -->
<div class="abs" style="left:1023px;top:62px;width:48px;height:22px;background:#858ca2;border-radius:4px"></div>
<div class="t" id="tHi" style="left:1028.5px;top:66px;color:#fff;font-size:11px;letter-spacing:-0.15px">90.35B</div>
<div class="abs" style="left:1023px;top:266px;width:47.5px;height:22.4px;background:#4a6cf5;border-radius:4px"></div>
<div class="t" id="tLo" style="left:1028.5px;top:270px;color:#fff;font-size:11px;letter-spacing:-0.2px">84.88B</div>
<div class="t" id="tUSD" style="left:1035px;top:347px;color:#a1a7bb;font-size:11px">USD</div>

<!-- time label -->
<div class="abs" style="left:70px;top:358px;width:109px;height:26px;background:#858ca2;border-radius:4px"></div>
<div class="t" id="tTL" style="left:77px;top:364.5px;color:#fff;font-size:10.5px;letter-spacing:-0.17px">18 Feb '26 16:45:00</div>

<!-- logo -->
<svg class="abs" style="left:878px;top:297.4px" width="35" height="32" viewBox="0 0 35 32"><g fill="none" stroke="#e6e8ec" stroke-width="1.7" stroke-linecap="round" stroke-linejoin="round"><path d="M23.3 23.2 A9.5 9.5 0 1 1 25.5 17.3"/><path d="M9.6 21.8 L13.6 13.6 Q14.8 11.6 15.5 13.6 L15.9 18.6 Q16.3 20.3 17.3 18.6 L19.3 13.9 Q20.3 12 21.1 14 L21.9 17.2 Q22.8 19.6 25.5 17.3"/></g></svg>
<div class="t" id="tCMC" style="left:912px;top:308px;color:#e2e5ec;font-size:12px;font-weight:700;line-height:14px;letter-spacing:0.8px">CoinMarketCap</div>

<!-- nav handle -->
<div class="abs" style="left:1016px;top:415.7px;width:12px;height:17.7px;background:#222531;border-radius:6px;box-shadow:0 0 3px 1px rgba(0,0,0,0.35)"></div>
<div class="abs" style="left:1019.8px;top:421px;width:1.5px;height:7px;background:#a1a7bb"></div>
<div class="abs" style="left:1022.6px;top:421px;width:1.5px;height:7px;background:#a1a7bb"></div>
</body></html>
